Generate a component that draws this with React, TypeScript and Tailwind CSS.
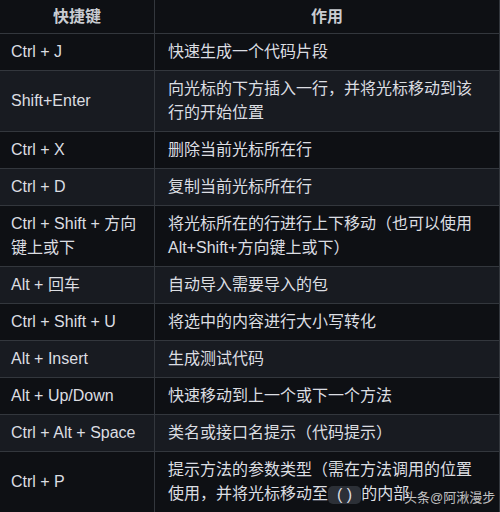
import { ReactNode } from 'react';

// 快捷键列表
const rows: { key: string; desc: ReactNode }[] = [
    { key: 'Ctrl + J', desc: '快速生成一个代码片段' },
    { key: 'Shift+Enter', desc: '向光标的下方插入一行，并将光标移动到该行的开始位置' },
    { key: 'Ctrl + X', desc: '删除当前光标所在行' },
    { key: 'Ctrl + D', desc: '复制当前光标所在行' },
    { key: 'Ctrl + Shift + 方向键上或下', desc: '将光标所在的行进行上下移动（也可以使用Alt+Shift+方向键上或下）' },
    { key: 'Alt + 回车', desc: '自动导入需要导入的包' },
    { key: 'Ctrl + Shift + U', desc: '将选中的内容进行大小写转化' },
    { key: 'Alt + Insert', desc: '生成测试代码' },
    { key: 'Alt + Up/Down', desc: '快速移动到上一个或下一个方法' },
    { key: 'Ctrl + Alt + Space', desc: '类名或接口名提示（代码提示）' },
    {
        key: 'Ctrl + P',
        desc: (
            <>
                提示方法的参数类型（需在方法调用的位置使用，并将光标移动至
                <code className="inline-block rounded-[5px] bg-[#2c3037] px-[9px] align-middle font-['Liberation_Sans','Noto_Sans_CJK_SC',sans-serif] leading-[18px]">( )</code>
                的内部
            </>
        ),
    },
];

export default function App() {
    return (
        <div className="relative h-[512px] w-[500px] overflow-hidden bg-[#0e1014] font-['Liberation_Sans','Noto_Sans_CJK_SC',sans-serif] text-[16px] leading-6 text-[#dcdee2]">
            {/* 表头 */}
            <div className="flex bg-[#0e1014] font-bold text-[#c9ccd1]">
                <div className="w-[155px] shrink-0 border-r border-[#33373d] pt-[5px] pb-1 text-center">快捷键</div>
                <div className="flex-1 border-r border-[#33373d] pt-[5px] pb-1 text-center">作用</div>
            </div>

            {/* 内容 */}
            {rows.map((row, i) => (
                <div key={i} className={`flex border-t border-[#33373d] ${i % 2 === 1 ? 'bg-[#181b21]' : 'bg-[#0e1014]'}`}>
                    <div className="flex w-[155px] shrink-0 items-center border-r border-[#33373d] py-[6px] pr-3 pl-[11px]">{row.key}</div>
                    <div className="flex-1 border-r border-[#33373d] py-[6px] pr-[13px] pl-[13px]">{row.desc}</div>
                </div>
            ))}

            {/* 水印 */}
            <div className="absolute top-[488px] left-[404px] text-[13px] leading-5 text-white/75">头条@阿湫漫步</div>
        </div>
    );
}
